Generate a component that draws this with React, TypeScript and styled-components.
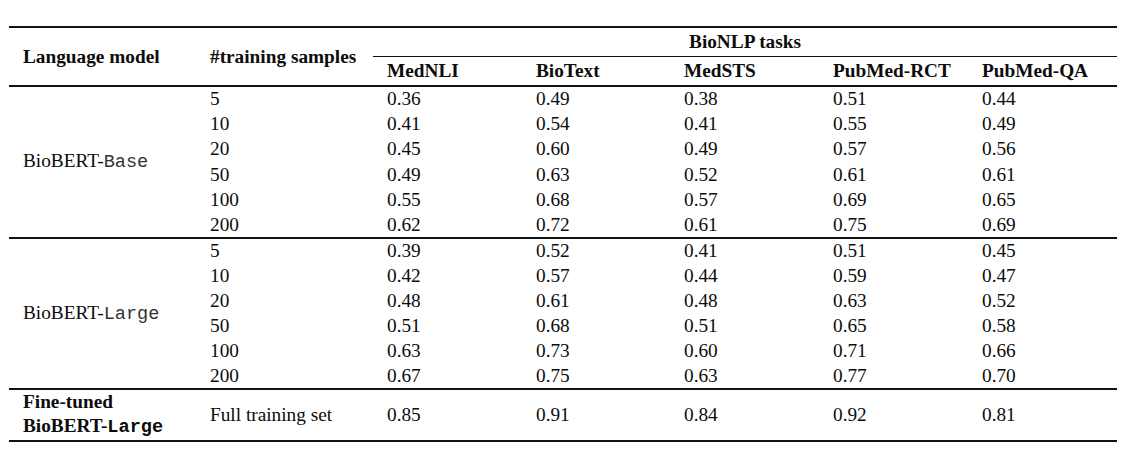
import styled, { createGlobalStyle } from 'styled-components';

const GlobalStyle = createGlobalStyle`
  html, body {
    margin: 0;
    padding: 0;
    background: #fff;
  }
  body {
    font-family: "Liberation Serif", "Times New Roman", serif;
    color: #0c0c0c;
  }
`;

const Page = styled.div`
  padding: 26px 0 0 9px;
  width: 1141px;
  height: 456px;
  box-sizing: border-box;
`;

const Table = styled.table`
  border-collapse: collapse;
  table-layout: fixed;
  width: 1108px;
  font-size: 19.3px;
  border-top: 2px solid #111;
  border-bottom: 2px solid #111;
`;

const HeadCell = styled.th<{ $center?: boolean; $rule?: boolean; $h?: number }>`
  font-weight: bold;
  text-align: ${({ $center }) => ($center ? 'center' : 'left')};
  padding: 0 0 0 ${({ $center }) => ($center ? '0' : '14px')};
  height: ${({ $h }) => ($h ? `${$h}px` : 'auto')};
  vertical-align: middle;
  white-space: nowrap;
  line-height: 1;
  border-bottom: ${({ $rule }) => ($rule ? '1px solid #111' : 'none')};
`;

const Group = styled.tbody`
  border-top: 2px solid #111;
`;

const Row = styled.tr<{ $h: number }>`
  height: ${({ $h }) => $h}px;
`;

const Cell = styled.td<{ $bold?: boolean }>`
  padding: 0 0 0 14px;
  vertical-align: middle;
  white-space: nowrap;
  line-height: 24px;
  font-weight: ${({ $bold }) => ($bold ? 'bold' : 'normal')};
`;

const Mono = styled.span`
  font-family: "Liberation Mono", "Courier New", monospace;
  font-size: 18.6px;
  color: #333;
`;

const BoldMono = styled(Mono)`
  font-weight: bold;
  color: #0c0c0c;
`;

const Stack = styled.div`
  display: flex;
  flex-direction: column;
`;

const tasks = ['MedNLI', 'BioText', 'MedSTS', 'PubMed-RCT', 'PubMed-QA'];
const samples = ['5', '10', '20', '50', '100', '200'];

const groups = [
  {
    name: 'Base',
    heights: [25, 25, 26, 25, 25, 26],
    rows: [
      ['0.36', '0.49', '0.38', '0.51', '0.44'],
      ['0.41', '0.54', '0.41', '0.55', '0.49'],
      ['0.45', '0.60', '0.49', '0.57', '0.56'],
      ['0.49', '0.63', '0.52', '0.61', '0.61'],
      ['0.55', '0.68', '0.57', '0.69', '0.65'],
      ['0.62', '0.72', '0.61', '0.75', '0.69'],
    ],
  },
  {
    name: 'Large',
    heights: [25, 25, 25, 25, 25, 26],
    rows: [
      ['0.39', '0.52', '0.41', '0.51', '0.45'],
      ['0.42', '0.57', '0.44', '0.59', '0.47'],
      ['0.48', '0.61', '0.48', '0.63', '0.52'],
      ['0.51', '0.68', '0.51', '0.65', '0.58'],
      ['0.63', '0.73', '0.60', '0.71', '0.66'],
      ['0.67', '0.75', '0.63', '0.77', '0.70'],
    ],
  },
];

const finetuned = ['0.85', '0.91', '0.84', '0.92', '0.81'];
const widths = [187, 177, 149, 148, 149, 149, 149];

const App = () => (
  <Page>
    <GlobalStyle />
    <Table>
      <colgroup>
        {widths.map((w, i) => (
          <col key={i} style={{ width: w }} />
        ))}
      </colgroup>
      <thead>
        <tr>
          <HeadCell rowSpan={2}>Language model</HeadCell>
          <HeadCell rowSpan={2}>#training samples</HeadCell>
          <HeadCell colSpan={5} $center $rule $h={28}>
            BioNLP tasks
          </HeadCell>
        </tr>
        <tr>
          {tasks.map((t) => (
            <HeadCell key={t} $h={28}>
              {t}
            </HeadCell>
          ))}
        </tr>
      </thead>
      {groups.map((g) => (
        <Group key={g.name}>
          {g.rows.map((vals, i) => (
            <Row key={i} $h={g.heights[i]}>
              {i === 0 && (
                <Cell rowSpan={g.rows.length}>
                  BioBERT-<Mono>{g.name}</Mono>
                </Cell>
              )}
              <Cell>{samples[i]}</Cell>
              {vals.map((v, j) => (
                <Cell key={j}>{v}</Cell>
              ))}
            </Row>
          ))}
        </Group>
      ))}
      <Group>
        <Row $h={49}>
          <Cell $bold>
            <Stack>
              <span>Fine-tuned</span>
              <span>
                BioBERT-<BoldMono>Large</BoldMono>
              </span>
            </Stack>
          </Cell>
          <Cell>Full training set</Cell>
          {finetuned.map((v, j) => (
            <Cell key={j}>{v}</Cell>
          ))}
        </Row>
      </Group>
    </Table>
  </Page>
);

export default App;
